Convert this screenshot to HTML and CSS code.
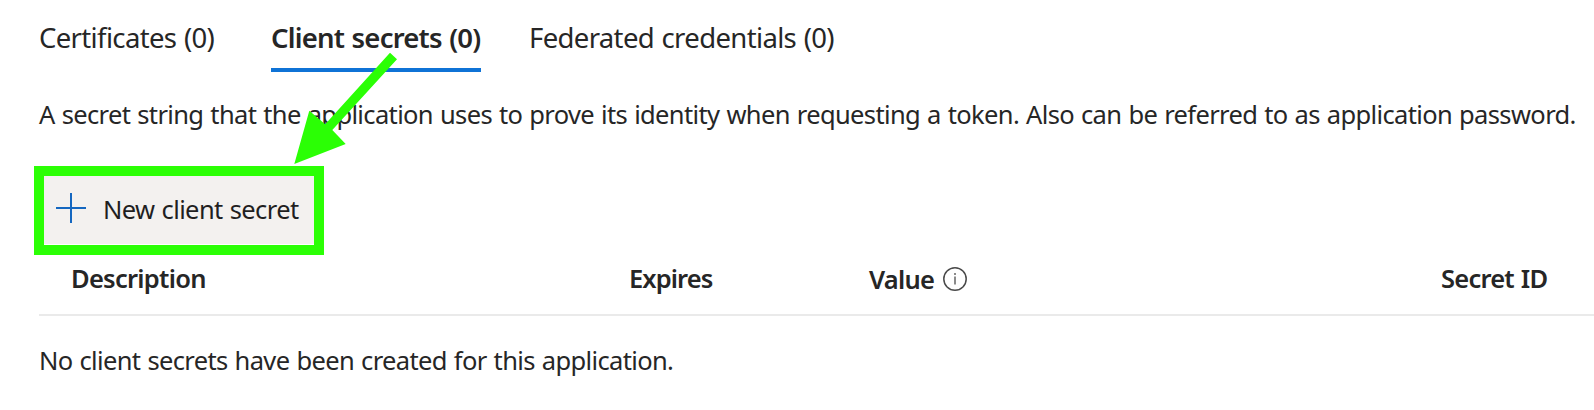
FILE: index.html
```html
<!DOCTYPE html>
<html lang="en">
<head>
<meta charset="utf-8">
<title>Certificates &amp; secrets</title>
<link rel="stylesheet" href="styles.css">
</head>
<body>
<main class="page">
  <nav class="tabs">
    <a class="tab">Certificates (0)</a>
    <a class="tab tab-active">Client secrets (0)</a>
    <a class="tab">Federated credentials (0)</a>
  </nav>
  <p class="intro">A secret string that the application uses to prove its identity when requesting a token. Also can be referred to as application password.</p>
  <button class="new-secret" type="button">
    <svg class="plus" width="30" height="30" viewBox="0 0 30 30"><path d="M15 0v30M0 15h30" stroke="#1467c0" stroke-width="2"/></svg>
    <span>New client secret</span>
  </button>
  <div class="table-head">
    <span>Description</span>
    <span class="expires">Expires</span>
    <span class="value"><span>Value</span>
      <svg class="info" width="24" height="24" viewBox="0 0 24 24"><circle cx="12" cy="12" r="11.2" fill="none" stroke="#4a4a4a" stroke-width="1.5"/><path d="M12 9.500v8M12 6v2" stroke="#666" stroke-width="1.5"/></svg>
    </span>
    <span class="secret-id">Secret ID</span>
  </div>
  <p class="empty">No client secrets have been created for this application.</p>
  <svg class="arrow" width="109" height="113" viewBox="0 0 109 113"><path d="M101 .7L108 7.300L43.300 78L56.700 92L5.300 112L20.300 58.700L36.200 72.300Z" fill="#2bff05"/></svg>
</main>
</body>
</html>
```
FILE: styles.css
```css
body {
  margin: 0;
  background: #fff;
  color: #262626;
  font: 25.5px/36px "Noto Sans", "Open Sans", sans-serif;
  letter-spacing: -0.64px;
  word-spacing: 1px;
  white-space: nowrap;
}
.page {
  position: relative;
  box-sizing: border-box;
  height: 410px;
  padding: 19px 0 0 39px;
  overflow: hidden;
}
.tabs {
  display: flex;
  font-size: 27.5px;
  line-height: 38px;
  letter-spacing: -0.64px;
}
.tab {
  padding-bottom: 11px;
  border-bottom: 4px solid transparent;
}
.tab-active {
  width: 210px;
  margin: 0 48px 0 57px;
  border-color: #0f73d6;
  font-weight: 600;
  letter-spacing: -0.78px;
}
.tab:first-child {
  width: 175px;
}
.intro {
  margin: 24px 0 34px;
}
.new-secret {
  display: flex;
  align-items: center;
  box-sizing: border-box;
  width: 290px;
  height: 89px;
  margin: 0 0 5px -5px;
  padding: 0 0 3px 12px;
  gap: 17px;
  border: 10px solid #2bff05;
  background: #f3f1ef;
  box-shadow: inset 0 -1px #fff;
  color: #1f1f1f;
  font: inherit;
  letter-spacing: -0.6px;
  word-spacing: 1px;
}
.plus {
  margin-top: -3px;
}
.table-head {
  display: grid;
  grid-template-columns: 558px 240px 572px 1fr;
  height: 54px;
  padding-left: 32px;
  border-bottom: 2px solid #eaeaea;
  font-weight: 600;
  letter-spacing: -0.73px;
}
.expires {
  letter-spacing: -0.92px;
}
.value {
  display: flex;
  gap: 9px;
  padding-top: 1px;
}
.info {
  margin-top: 6px;
}
.secret-id {
  letter-spacing: -0.78px;
}
.empty {
  margin: 26px 0 0;
}
/* Callout pointing from the active tab to the button */
.arrow {
  position: absolute;
  left: 289px;
  top: 52px;
}
```
